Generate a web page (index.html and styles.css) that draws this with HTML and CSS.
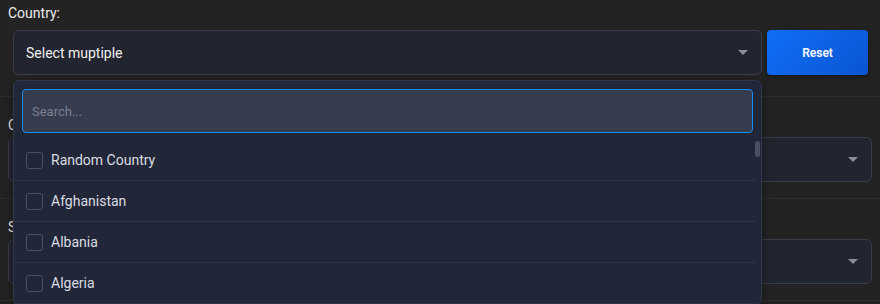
FILE: index.html
```html
<!DOCTYPE html>
<html lang="en">

<head>
    <meta charset="UTF-8">
    <meta name="viewport" content="width=device-width, initial-scale=1.0">
    <title>Multi select</title>
    <link rel="stylesheet" href="styles.css">
</head>

<body>

    <div class="form">
        <div class="field field-first">
            <label class="field-label">Country:</label>
            <div class="field-row">
                <div class="select-wrap">
                    <div class="select">
                        <span class="select-text">Select muptiple</span>
                        <span class="caret"></span>
                    </div>

                    <!-- open dropdown -->
                    <div class="dropdown">
                        <input class="search" type="text" placeholder="Search...">
                        <div class="options">
                            <label class="option"><span class="check"></span>Random Country</label>
                            <label class="option"><span class="check"></span>Afghanistan</label>
                            <label class="option"><span class="check"></span>Albania</label>
                            <label class="option"><span class="check"></span>Algeria</label>
                            <span class="thumb"></span>
                        </div>
                    </div>
                </div>
                <button class="btn-reset">Reset</button>
            </div>
        </div>

        <div class="field">
            <label class="field-label">City:</label>
            <div class="select">
                <span class="select-text"></span>
                <span class="caret"></span>
            </div>
        </div>

        <div class="field">
            <label class="field-label">State:</label>
            <div class="select">
                <span class="select-text"></span>
                <span class="caret"></span>
            </div>
        </div>
    </div>

</body>

</html>
```

FILE: styles.css
```css
html,
body {
    margin: 0;
    height: 100%;
    overflow: hidden;
    background-color: #232323;
    font-family: Roboto, "Liberation Sans", Arial, sans-serif;
    color: #ececec;
}

.field {
    padding: 18px 8px 16px 8px;
    border-bottom: 1px solid #2e2e2e;
}

.field-first {
    padding-top: 3px;
    padding-bottom: 17px;
}

.field-label {
    display: block;
    font-size: 14px;
    line-height: 20px;
    margin-bottom: 2px;
}

.field-first .field-label {
    margin-bottom: 3px;
}

.field-row {
    display: flex;
    gap: 5px;
    padding: 4px 4px 4px 5px;
}

.select-wrap {
    flex: 1;
    position: relative;
}

.select {
    height: 43px;
    display: flex;
    align-items: center;
    justify-content: space-between;
    padding: 0 13px 0 12px;
    background-color: #22252f;
    border: 1px solid #3a3e4b;
    border-radius: 6px;
    font-size: 14px;
    color: #f2f2f2;
}

.caret {
    width: 0;
    height: 0;
    border-left: 5px solid transparent;
    border-right: 5px solid transparent;
    border-top: 5px solid #8b8e98;
}

.btn-reset {
    width: 101px;
    height: 45px;
    border: none;
    border-radius: 4px;
    background: linear-gradient(135deg, #0e6ff6, #0b55d2);
    color: #ffffff;
    font-family: inherit;
    font-size: 12px;
    font-weight: 600;
    box-shadow: 0 2px 6px rgba(0, 0, 0, 0.35);
    cursor: pointer;
}

.dropdown {
    position: absolute;
    top: 50px;
    left: 0;
    right: 0;
    z-index: 10;
    padding: 8px 0 0 0;
    background-color: #212739;
    border: 1px solid #30374a;
    border-radius: 6px;
    box-shadow: 0 4px 12px rgba(0, 0, 0, 0.4);
}

.search {
    display: block;
    box-sizing: border-box;
    width: calc(100% - 16px);
    height: 44px;
    margin: 0 8px;
    padding: 0 9px;
    background-color: #363b4e;
    border: 1px solid #1a8cf5;
    border-radius: 4px;
    outline: none;
    color: #e0e0e0;
    font-family: inherit;
    font-size: 13px;
}

.search::placeholder {
    color: #7c8090;
}

.options {
    position: relative;
    margin-top: 7px;
    height: 164px;
    overflow: hidden;
    padding-right: 6px;
}

.option {
    display: flex;
    align-items: center;
    gap: 8px;
    height: 40px;
    padding-left: 12px;
    border-bottom: 1px solid #2f3547;
    font-size: 14px;
    color: #dcdde2;
}

.check {
    width: 15px;
    height: 15px;
    border: 1px solid #4b5164;
    border-radius: 3px;
}

.thumb {
    position: absolute;
    top: 1px;
    right: 1px;
    width: 5px;
    height: 16px;
    border-radius: 3px;
    background-color: #4a5062;
}
```
